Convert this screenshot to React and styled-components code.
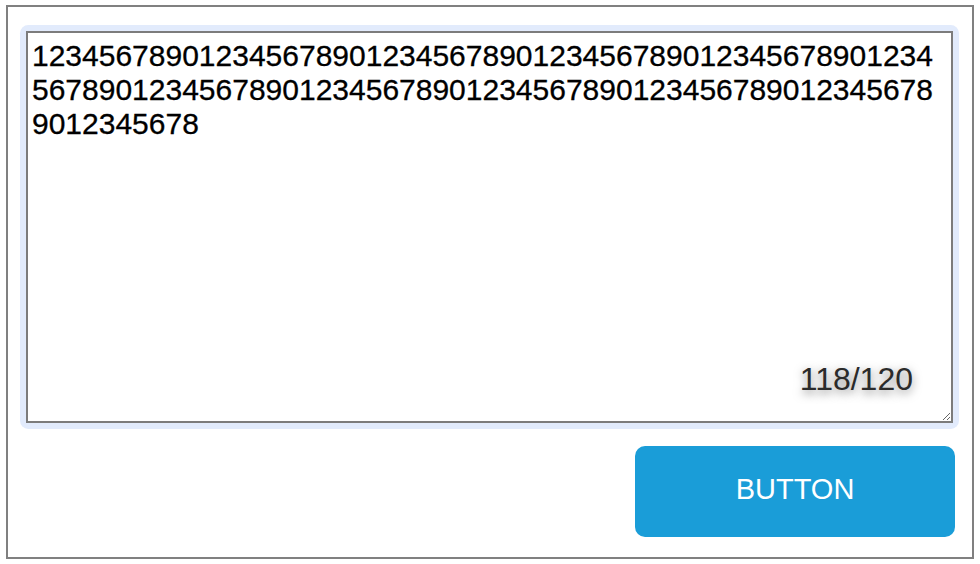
import React from "react";
import styled, { createGlobalStyle } from "styled-components";

const GlobalStyle = createGlobalStyle`
  body {
    margin: 0;
    background: #ffffff;
    font-family: "Liberation Sans", Arial, sans-serif;
  }
`;

const Frame = styled.div`
  box-sizing: border-box;
  width: 968px;
  margin: 5px 0 0 6px;
  border: 2px solid #808080;
  padding: 24px 17px 20px 18px;
  display: flex;
  flex-direction: column;
  align-items: flex-start;
  gap: 23px;
`;

const Field = styled.div`
  position: relative;
  width: 927px;
  height: 392px;
  border-radius: 3px;
  box-shadow: 0 0 0 6px #e2ebfc;
`;

const TextArea = styled.textarea`
  box-sizing: border-box;
  display: block;
  width: 100%;
  height: 100%;
  margin: 0;
  border: 2px solid #7c7c7c;
  padding: 6px 4px;
  font-family: "Liberation Sans", Arial, sans-serif;
  font-size: 30px;
  line-height: normal;
  color: #000;
  background: #fff;
  resize: both;
  outline: none;
  -webkit-text-stroke: 0.3px #000;
`;

const Counter = styled.span`
  position: absolute;
  right: 40px;
  bottom: 25px;
  font-family: "Liberation Sans", Arial, sans-serif;
  font-size: 32px;
  color: #2b2b2b;
  text-shadow: 0 3px 10px rgba(0, 0, 0, 0.5);
  pointer-events: none;
`;

const Actions = styled.div`
  align-self: stretch;
  display: flex;
  justify-content: flex-end;
`;

const Button = styled.button`
  width: 320px;
  height: 91px;
  border: none;
  border-radius: 10px;
  background: #1a9dd8;
  color: #ffffff;
  font-family: "Liberation Sans", Arial, sans-serif;
  font-size: 29px;
  padding: 0 0 4px;
  cursor: pointer;
`;

const MAX = 120;
const TEXT =
  "1234567890123456789012345678901234567890123456789012345678901234567890123456789012345678901234567890123456789012345678";

export default function App() {
  const [value, setValue] = React.useState(TEXT);
  return (
    <>
      <GlobalStyle />
      <Frame>
        <Field>
          <TextArea
            value={value}
            maxLength={MAX}
            onChange={(e) => setValue(e.target.value)}
          />
          <Counter>
            {value.length}/{MAX}
          </Counter>
        </Field>
        <Actions>
          <Button>BUTTON</Button>
        </Actions>
      </Frame>
    </>
  );
}
